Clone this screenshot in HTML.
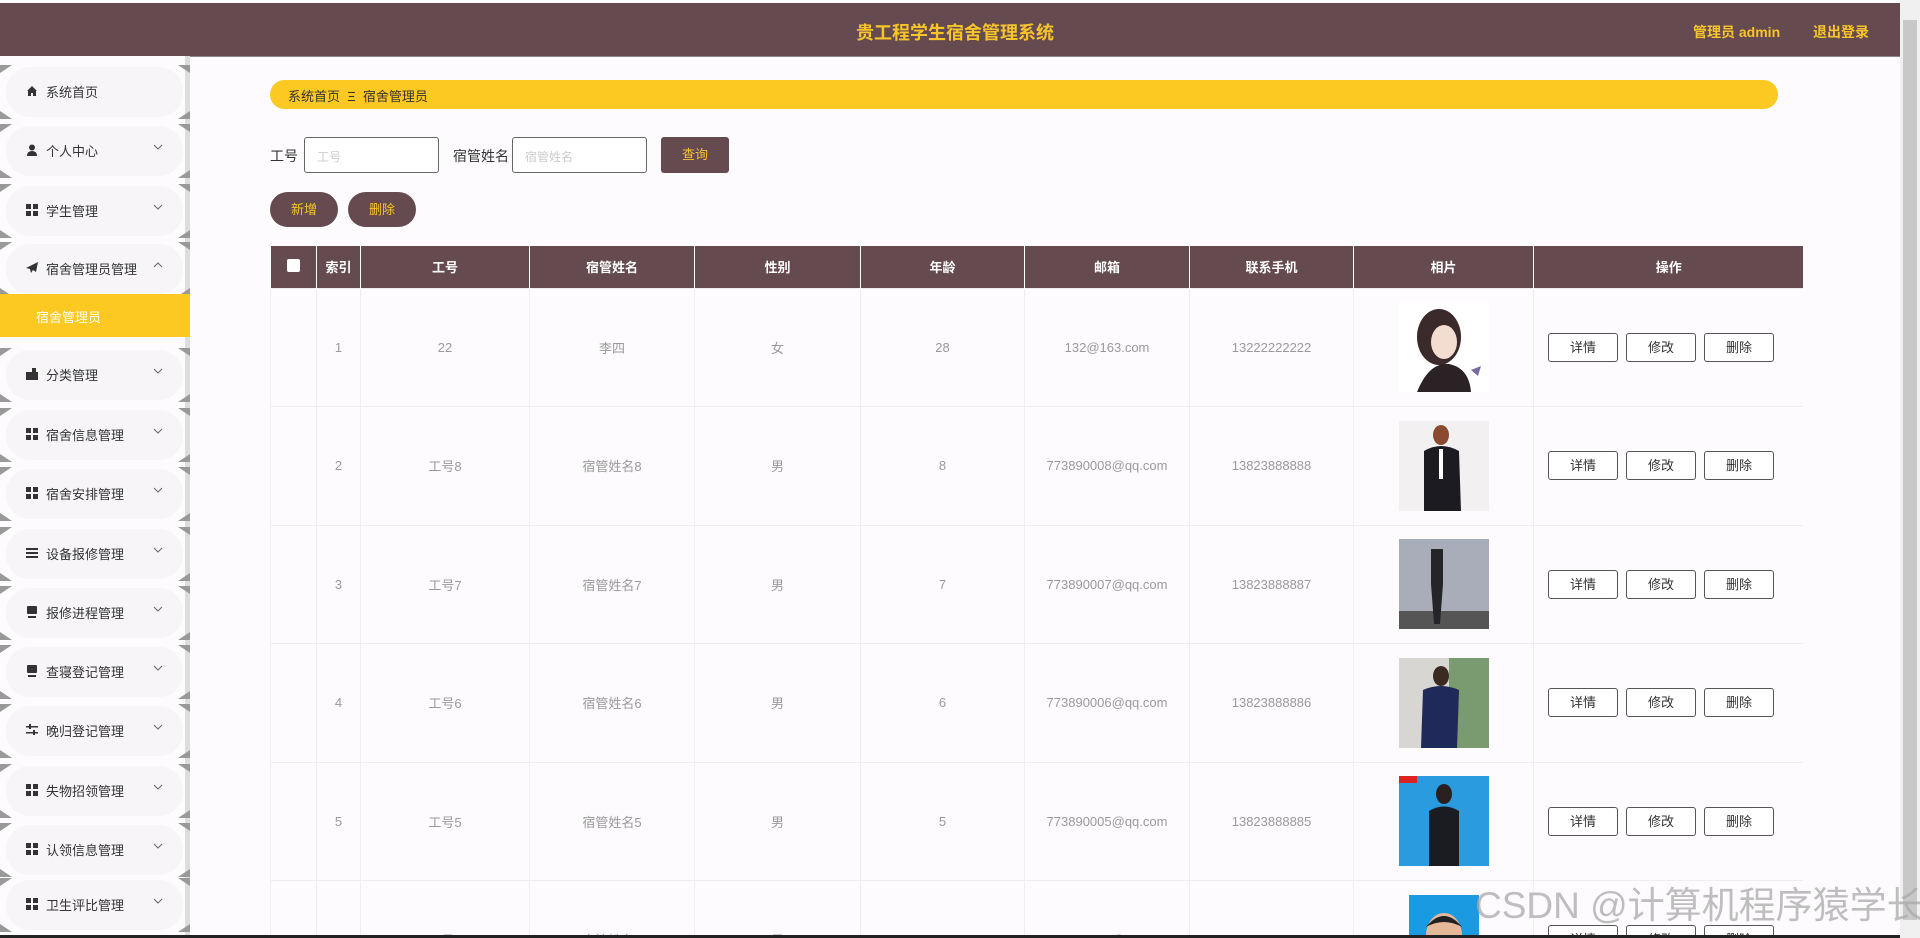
<!DOCTYPE html>
<html><head><meta charset="utf-8">
<style>
*{margin:0;padding:0;box-sizing:border-box}
html,body{width:1920px;height:938px;overflow:hidden}
body{background:#fdfbfd;font-family:"Liberation Sans","Noto Sans CJK SC",sans-serif}
#w{position:relative;width:1920px;height:938px;overflow:hidden}
.top{position:absolute;left:0;top:0;width:1900px;height:56px;background:#654b50;border-top:3px solid #fff;box-shadow:0 1px 0 #888}
.top .t{position:absolute;left:0;width:1910px;text-align:center;top:16px;color:#f7c52a;font-size:18px;font-weight:bold}
.top .r{position:absolute;top:19px;color:#f7c52a;font-size:14px;font-weight:bold}
.sb{position:absolute;left:0;top:56px;width:190px;height:880px;background:#fdfbfd}
.sb .ln{position:absolute;right:0;top:0;width:5px;height:880px;background:#ddd}
.it{position:absolute;left:6px;width:177px;height:50px;background:#f7f5f8;border-radius:24px;font-size:13px;color:#333}
.it .ic{position:absolute;left:20px;top:18px;width:12px;height:12px}
.it .tx{position:absolute;left:40px;top:15px}
.it .ch{position:absolute;right:20px;top:18px;width:10px;height:6px}
.tri{position:absolute;width:0;height:0}
.sub{position:absolute;left:0;top:294px;width:190px;height:43px;background:#fcc822;color:#fff;font-size:13px;padding:13px 0 0 36px}
.bc{position:absolute;left:270px;top:80px;width:1508px;height:29px;background:#fcc822;border-radius:15px;font-size:13px;color:#333;padding:6px 0 0 18px}
.lab{position:absolute;top:146px;font-size:14px;color:#333}
.inp{position:absolute;top:137px;height:36px;width:135px;border:1px solid #666;border-radius:3px;background:#fff;font-size:12px;color:#ccc;padding:10px 0 0 12px}
.btn{position:absolute;background:#654b50;color:#f7c52a;font-size:13px;text-align:center}
.tw{position:absolute;left:270px;top:246px;width:1533px;height:689px;overflow:hidden}
table{width:1533px;border-collapse:collapse;table-layout:fixed}
th{background:#654b50;color:#fff;font-size:13px;height:42px;border-left:1px solid #fff;font-weight:bold}
td{height:118.5px;text-align:center;font-size:13px;color:#9a9a9a;border:1px solid #eee;background:#fdfbfd}
td.op{text-align:left;padding-left:14px}
.ob{display:inline-block;width:70px;height:29px;border:1px solid #555;border-radius:3px;background:#fff;color:#333;line-height:27px;margin-right:8px;text-align:center;font-size:13px}
.ph{width:90px;height:90px;display:block;margin:0 auto}
.sc{position:absolute;right:0;top:0;width:20px;height:938px;background:#f0f0f0}
.wm{position:absolute;left:1475px;top:884px;font-size:37px;line-height:44px;color:rgba(170,170,170,.75);white-space:nowrap}
</style></head><body><div id="w">
<div class="top"><div class="t">贵工程学生宿舍管理系统</div><span class="r" style="left:1693px">管理员 admin</span><span class="r" style="left:1813px">退出登录</span></div>
<div class="sb"><div class="ln"></div></div>
<div id="items"></div>
<div class="sub">宿舍管理员</div>
<div class="bc">系统首页 &nbsp;Ξ&nbsp; 宿舍管理员</div>
<div class="lab" style="left:270px">工号</div><div class="inp" style="left:304px">工号</div>
<div class="lab" style="left:453px">宿管姓名</div><div class="inp" style="left:512px">宿管姓名</div>
<div class="btn" style="left:661px;top:137px;width:68px;height:36px;border-radius:3px;line-height:36px">查询</div>
<div class="btn" style="left:270px;top:192px;width:68px;height:35px;border-radius:18px;line-height:35px">新增</div>
<div class="btn" style="left:348px;top:192px;width:68px;height:35px;border-radius:18px;line-height:35px">删除</div>
<div class="tw"><table>
<colgroup><col style="width:46px"><col style="width:44px"><col style="width:169px"><col style="width:165px"><col style="width:166px"><col style="width:164px"><col style="width:165px"><col style="width:164px"><col style="width:180px"><col style="width:270px"></colgroup>
<tr><th><span style="display:inline-block;width:13px;height:13px;background:#fff;border-radius:2px"></span></th><th>索引</th><th>工号</th><th>宿管姓名</th><th>性别</th><th>年龄</th><th>邮箱</th><th>联系手机</th><th>相片</th><th>操作</th></tr>
<tr><td></td><td>1</td><td>22</td><td>李四</td><td>女</td><td>28</td><td>132@163.com</td><td>13222222222</td><td><svg class="ph" viewBox="0 0 90 90"><rect width="90" height="90" fill="#fff"/><ellipse cx="40" cy="35" rx="22" ry="28" fill="#3a2a2a"/><ellipse cx="45" cy="40" rx="13" ry="17" fill="#f3dcd0"/><path d="M18 90 Q30 60 50 62 Q70 66 72 90Z" fill="#2a2224"/><path d="M72 68 l10 -4 -3 10z" fill="#7a6aa0"/></svg></td><td class="op"><span class="ob">详情</span><span class="ob">修改</span><span class="ob">删除</span></td></tr>
<tr><td></td><td>2</td><td>工号8</td><td>宿管姓名8</td><td>男</td><td>8</td><td>773890008@qq.com</td><td>13823888888</td><td><svg class="ph" viewBox="0 0 90 90"><rect width="90" height="90" fill="#f2f0f0"/><ellipse cx="42" cy="14" rx="8" ry="10" fill="#8a4a30"/><path d="M25 90 L25 30 Q42 20 60 30 L62 90Z" fill="#1d1b22"/><path d="M40 28 l4 0 0 30 -4 0z" fill="#fff"/></svg></td><td class="op"><span class="ob">详情</span><span class="ob">修改</span><span class="ob">删除</span></td></tr>
<tr><td></td><td>3</td><td>工号7</td><td>宿管姓名7</td><td>男</td><td>7</td><td>773890007@qq.com</td><td>13823888887</td><td><svg class="ph" viewBox="0 0 90 90"><rect width="90" height="90" fill="#a9adba"/><rect y="72" width="90" height="18" fill="#555"/><path d="M32 10 h12 v35 l-3 40 h-6 l-3 -40z" fill="#252428"/></svg></td><td class="op"><span class="ob">详情</span><span class="ob">修改</span><span class="ob">删除</span></td></tr>
<tr><td></td><td>4</td><td>工号6</td><td>宿管姓名6</td><td>男</td><td>6</td><td>773890006@qq.com</td><td>13823888886</td><td><svg class="ph" viewBox="0 0 90 90"><rect width="90" height="90" fill="#d8d6d2"/><rect x="50" width="40" height="90" fill="#7a9a70"/><ellipse cx="42" cy="18" rx="8" ry="10" fill="#3a2a22"/><path d="M22 90 L24 32 Q42 24 60 32 L58 90Z" fill="#1f2a5a"/></svg></td><td class="op"><span class="ob">详情</span><span class="ob">修改</span><span class="ob">删除</span></td></tr>
<tr><td></td><td>5</td><td>工号5</td><td>宿管姓名5</td><td>男</td><td>5</td><td>773890005@qq.com</td><td>13823888885</td><td><svg class="ph" viewBox="0 0 90 90"><rect width="90" height="90" fill="#2b9be0"/><ellipse cx="45" cy="18" rx="8" ry="10" fill="#2a2020"/><path d="M30 90 L30 35 Q45 26 60 35 L60 90Z" fill="#1b1b22"/><rect x="0" y="0" width="18" height="7" fill="#d22"/></svg></td><td class="op"><span class="ob">详情</span><span class="ob">修改</span><span class="ob">删除</span></td></tr>
<tr><td></td><td>6</td><td>工号4</td><td>宿管姓名4</td><td>男</td><td>4</td><td>773890004@qq.com</td><td>13823888884</td><td><svg class="ph" viewBox="0 0 90 90"><rect x="10" width="70" height="90" fill="#1a9ae0"/><ellipse cx="45" cy="40" rx="18" ry="22" fill="#e6b89a"/><path d="M27 32 Q45 10 63 32 Q45 22 27 32Z" fill="#222"/></svg></td><td class="op"><span class="ob">详情</span><span class="ob">修改</span><span class="ob">删除</span></td></tr>
</table></div>
<div class="sc"><div style="position:absolute;left:3px;top:20px;width:14px;height:900px;background:#c8c8c8"></div></div>
<div style="position:absolute;left:0;top:935px;width:1900px;height:3px;background:#222"></div>
<div class="wm">CSDN @计算机程序猿学长</div>
</div>
<script>
var d=[["系统首页","h",0],["个人中心","u",1],["学生管理","g",1],["宿舍管理员管理","p",2],["分类管理","b",1],["宿舍信息管理","g",1],["宿舍安排管理","g",1],["设备报修管理","l",1],["报修进程管理","m",1],["查寝登记管理","m",1],["晚归登记管理","s",1],["失物招领管理","g",1],["认领信息管理","g",1],["卫生评比管理","g",1]];
var ys=[67,126,186,244,350,410,469,529,588,647,706,766,825,880];
var icons={h:'<svg class="ic" viewBox="0 0 12 12"><path d="M6 1 L11 6 H10 V11 H7 V8 H5 V11 H2 V6 H1Z" fill="#333"/></svg>',
u:'<svg class="ic" viewBox="0 0 12 12"><circle cx="6" cy="3.5" r="3" fill="#333"/><path d="M1 12 Q1 7 6 7 Q11 7 11 12Z" fill="#333"/></svg>',
g:'<svg class="ic" viewBox="0 0 12 12"><rect x="0" y="0" width="5" height="5" fill="#333"/><rect x="7" y="0" width="5" height="5" fill="#333"/><rect x="0" y="7" width="5" height="5" fill="#333"/><rect x="7" y="7" width="5" height="5" fill="#333"/></svg>',
p:'<svg class="ic" viewBox="0 0 12 12"><path d="M12 0 L0 6 L4 7 L5 11 L7 8 L10 10Z" fill="#333"/></svg>',
b:'<svg class="ic" viewBox="0 0 12 12"><rect x="0" y="4" width="12" height="8" fill="#333"/><rect x="6" y="0" width="4" height="4" fill="#333"/></svg>',
l:'<svg class="ic" viewBox="0 0 12 12"><rect y="1" width="12" height="2" fill="#333"/><rect y="5" width="12" height="2" fill="#333"/><rect y="9" width="12" height="2" fill="#333"/></svg>',
m:'<svg class="ic" viewBox="0 0 12 12"><rect x="1" y="0" width="10" height="8" rx="1" fill="#333"/><rect x="2" y="10" width="8" height="2" fill="#333"/></svg>',
s:'<svg class="ic" viewBox="0 0 12 12"><rect y="2" width="12" height="1.5" fill="#333"/><rect y="8" width="12" height="1.5" fill="#333"/><rect x="3" y="0" width="2" height="5" fill="#333"/><rect x="7" y="6" width="2" height="5" fill="#333"/></svg>'};
var dn='<svg class="ch" viewBox="0 0 10 6"><path d="M1 1 L5 5 L9 1" fill="none" stroke="#666" stroke-width="1"/></svg>';
var up='<svg class="ch" viewBox="0 0 10 6"><path d="M1 5 L5 1 L9 5" fill="none" stroke="#666" stroke-width="1"/></svg>';
var h='';
for(var i=0;i<d.length;i++){var y=ys[i];
h+='<div class="it" style="top:'+y+'px">'+icons[d[i][1]]+'<span class="tx">'+d[i][0]+'</span>'+(d[i][2]==1?dn:d[i][2]==2?up:'')+'</div>';
h+='<div class="tri" style="left:0;top:'+(y-2)+'px;border-top:8px solid #999;border-right:12px solid transparent"></div>';
if(y+52<=938)h+='<div class="tri" style="left:0;top:'+(y+44)+'px;border-bottom:8px solid #999;border-right:12px solid transparent"></div>';
h+='<div class="tri" style="left:178px;top:'+(y-2)+'px;border-top:8px solid #999;border-left:12px solid transparent"></div>';
if(y+52<=938)h+='<div class="tri" style="left:178px;top:'+(y+44)+'px;border-bottom:8px solid #999;border-left:12px solid transparent"></div>';}
document.getElementById('items').innerHTML=h;
</script>
</body></html>
